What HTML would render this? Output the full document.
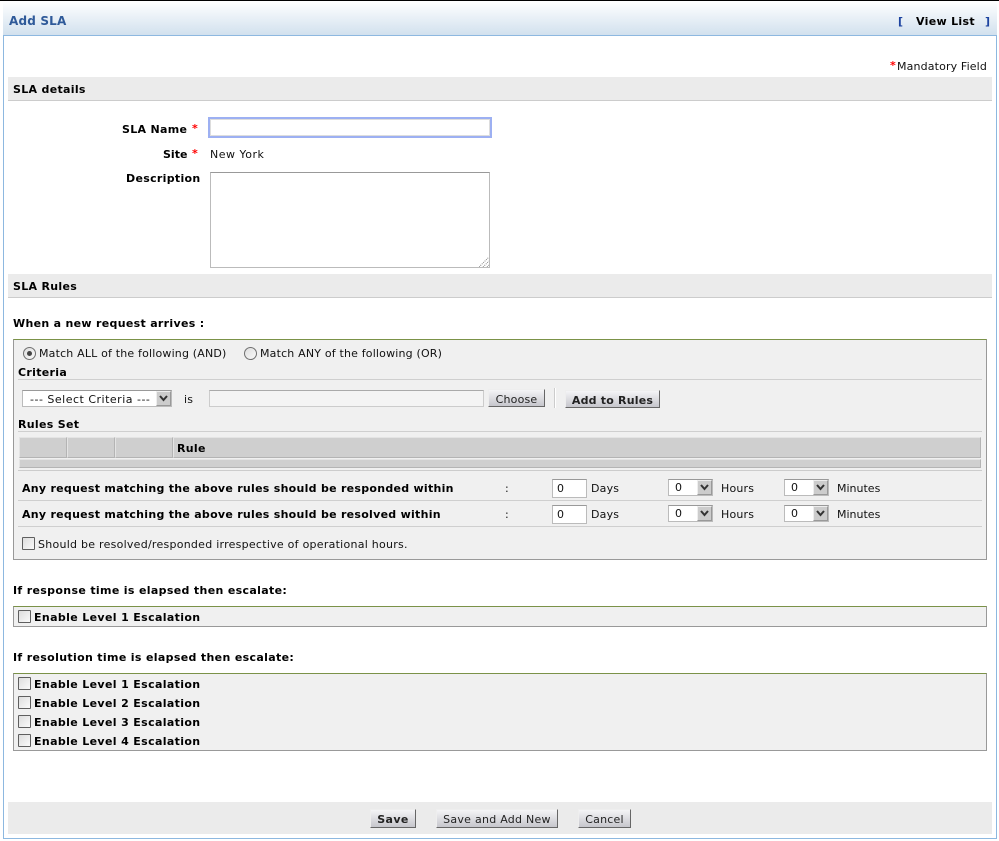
<!DOCTYPE html>
<html><head><meta charset="utf-8"><title>Add SLA</title>
<style>
html,body{margin:0;padding:0;background:#fff}
#p{position:relative;width:999px;height:841px;overflow:hidden;background:#fff;font:11px/14px "DejaVu Sans",Verdana,sans-serif;color:#111}
#p div,#p span.t{position:absolute;white-space:nowrap;box-sizing:border-box}
.t{line-height:14px;margin-top:1px;letter-spacing:.18px}
.b{font-weight:bold;color:#000}
#p span.b{letter-spacing:.31px}
.r{color:#f00;font-weight:bold}
.bar{left:8px;width:984px;background:#ebebeb;border-bottom:1px solid #ccc}
.hr{background:#cfcfcf;height:1px}
.cb{width:13px;height:13px;border:1px solid #5f5f5f;border-radius:1px;background:linear-gradient(135deg,#ddd,#fafafa)}
.rd{width:13px;height:13px;border:1px solid #707070;border-radius:50%;background:linear-gradient(135deg,#ddd,#fafafa)}
.btn{background:linear-gradient(#f4f4f6,#c6c6cc);border:1px solid;border-color:#eee #666 #666 #eee;text-align:center;height:18px;line-height:19px;color:#222;letter-spacing:.2px}
.inp{background:#fff;border:1px solid #bbb;border-top-color:#999;padding-left:4px;line-height:17px;height:19px}
.sel{background:#fff;border:1px solid #bbb;border-top-color:#999;line-height:16px;height:17px;padding-left:6px}
.ar{width:15px;height:15px;top:0;right:0;background:#ccc;border:1px solid #999;border-color:#eee #999 #999 #eee}
.ar svg{position:absolute;left:2px;top:3px}
.th{top:437px;height:21px;background:#cfcfcf;border:1px solid;border-color:#e4e4e4 #b4b4b4 #b4b4b4 #e4e4e4}
</style></head><body>
<div id="p">
<div style="left:0;top:0;width:999px;height:1px;background:#000"></div>
<div style="left:3px;top:35px;width:994px;height:804px;border:1px solid #8db8e0;background:#fff"></div>
<div style="left:3px;top:1px;width:994px;height:35px;background:linear-gradient(#fff,#d2e1ee);border-bottom:1px solid #8db8e0"></div>
<span class="t" style="left:9px;top:13px;font-size:12px;font-weight:bold;color:#2f5a99">Add SLA</span>
<span class="t" style="left:898px;top:14px;font-weight:bold;color:#1d44a0">[</span>
<span class="t b" style="left:916px;top:14px">View List</span>
<span class="t" style="left:985px;top:14px;font-weight:bold;color:#1d44a0">]</span>
<span class="t r" style="left:890px;top:58px">*</span>
<span class="t" style="left:897px;top:59px;letter-spacing:.14px">Mandatory Field</span>

<div class="bar" style="top:77px;height:24px"></div>
<span class="t b" style="left:13px;top:82px">SLA details</span>
<span class="t b" style="left:122px;top:122px">SLA Name</span><span class="t r" style="left:192px;top:121px">*</span>
<div style="left:208px;top:117px;width:284px;height:21px;background:#fff;border:2px solid #9db0f2;box-shadow:inset 0 0 0 1px #ddd"></div>
<span class="t b" style="left:163px;top:147px;letter-spacing:0!important">Site</span><span class="t r" style="left:192px;top:146px">*</span>
<span class="t" style="left:210px;top:147px;letter-spacing:.5px">New York</span>
<span class="t b" style="left:126px;top:171px">Description</span>
<div style="left:210px;top:172px;width:280px;height:96px;background:#fff;border:1px solid #bbb;border-top-color:#999"></div>
<svg style="position:absolute;left:479px;top:257px" width="10" height="10"><path d="M0 10L10 0M4 10L10 4M8 10L10 8" stroke="#888" stroke-width="1" stroke-dasharray="1 1" fill="none"/></svg>

<div class="bar" style="top:274px;height:24px"></div>
<span class="t b" style="left:13px;top:279px">SLA Rules</span>
<span class="t b" style="left:13px;top:316px">When a new request arrives :</span>

<div style="left:13px;top:339px;width:974px;height:221px;background:#f0f0f0;border:1px solid #999;border-top-color:#7b9248"></div>
<div class="rd" style="left:23px;top:347px"></div><div style="left:27px;top:351px;width:5px;height:5px;border-radius:50%;background:#444"></div>
<span class="t" style="left:39px;top:346px">Match ALL of the following (AND)</span>
<div class="rd" style="left:244px;top:347px"></div>
<span class="t" style="left:260px;top:346px">Match ANY of the following (OR)</span>
<span class="t b" style="left:18px;top:365px">Criteria</span>
<div class="hr" style="left:18px;top:379px;width:964px"></div>
<div class="sel" style="left:22px;top:390px;width:150px;padding-left:7px;line-height:18px;letter-spacing:.5px">--- Select Criteria ---<div class="ar"><svg width="9" height="7"><path d="M1 1L4.5 5L8 1" stroke="#333" stroke-width="2" fill="none"/></svg></div></div>
<span class="t" style="left:184px;top:392px">is</span>
<div style="left:209px;top:390px;width:275px;height:17px;background:#f4f4f4;border:1px solid #ccc;border-top-color:#aaa"></div>
<div class="btn" style="left:488px;top:389px;width:57px">Choose</div>
<div style="left:554px;top:388px;width:2px;height:20px;background:#ccc;border-right:1px solid #fff"></div>
<div class="btn b" style="left:565px;top:390px;width:95px;font-weight:bold">Add to Rules</div>
<span class="t b" style="left:18px;top:417px">Rules Set</span>
<div class="hr" style="left:18px;top:431px;width:964px"></div>
<div class="th" style="left:19px;width:48px"></div>
<div class="th" style="left:67px;width:48px"></div>
<div class="th" style="left:115px;width:58px"></div>
<div class="th" style="left:173px;width:808px"></div>
<span class="t b" style="left:177px;top:441px">Rule</span>
<div class="th" style="left:19px;top:459px;width:962px;height:9px"></div>
<div class="hr" style="left:18px;top:470px;width:964px;background:#ccc"></div>

<span class="t b" style="left:22px;top:481px;letter-spacing:.28px">Any request matching the above rules should be responded within</span>
<span class="t" style="left:505px;top:481px">:</span>
<div class="inp" style="left:552px;top:479px;width:35px">0</div>
<span class="t" style="left:591px;top:481px">Days</span>
<div class="sel" style="left:668px;top:479px;width:45px;height:17px">0<div class="ar"><svg width="9" height="7"><path d="M1 1L4.5 5L8 1" stroke="#333" stroke-width="2" fill="none"/></svg></div></div>
<span class="t" style="left:721px;top:481px">Hours</span>
<div class="sel" style="left:784px;top:479px;width:45px;height:17px">0<div class="ar"><svg width="9" height="7"><path d="M1 1L4.5 5L8 1" stroke="#333" stroke-width="2" fill="none"/></svg></div></div>
<span class="t" style="left:837px;top:481px;letter-spacing:0">Minutes</span>
<div class="hr" style="left:18px;top:500px;width:964px"></div>

<span class="t b" style="left:22px;top:507px;letter-spacing:.28px">Any request matching the above rules should be resolved within</span>
<span class="t" style="left:505px;top:507px">:</span>
<div class="inp" style="left:552px;top:505px;width:35px">0</div>
<span class="t" style="left:591px;top:507px">Days</span>
<div class="sel" style="left:668px;top:505px;width:45px;height:17px">0<div class="ar"><svg width="9" height="7"><path d="M1 1L4.5 5L8 1" stroke="#333" stroke-width="2" fill="none"/></svg></div></div>
<span class="t" style="left:721px;top:507px">Hours</span>
<div class="sel" style="left:784px;top:505px;width:45px;height:17px">0<div class="ar"><svg width="9" height="7"><path d="M1 1L4.5 5L8 1" stroke="#333" stroke-width="2" fill="none"/></svg></div></div>
<span class="t" style="left:837px;top:507px;letter-spacing:0">Minutes</span>
<div class="hr" style="left:18px;top:526px;width:964px"></div>

<div class="cb" style="left:22px;top:537px"></div>
<span class="t" style="left:38px;top:537px;letter-spacing:.26px">Should be resolved/responded irrespective of operational hours.</span>

<span class="t b" style="left:13px;top:583px;letter-spacing:.34px">If response time is elapsed then escalate:</span>
<div style="left:13px;top:606px;width:974px;height:21px;background:#f0f0f0;border:1px solid #999;border-top-color:#7b9248"></div>
<div class="cb" style="left:18px;top:610px"></div>
<span class="t b" style="left:34px;top:610px;letter-spacing:.36px">Enable Level 1 Escalation</span>

<span class="t b" style="left:13px;top:650px;letter-spacing:.34px">If resolution time is elapsed then escalate:</span>
<div style="left:13px;top:673px;width:974px;height:78px;background:#f0f0f0;border:1px solid #999;border-top-color:#7b9248"></div>
<div class="cb" style="left:18px;top:677px"></div><span class="t b" style="left:34px;top:677px;letter-spacing:.36px">Enable Level 1 Escalation</span>
<div class="cb" style="left:18px;top:696px"></div><span class="t b" style="left:34px;top:696px;letter-spacing:.36px">Enable Level 2 Escalation</span>
<div class="cb" style="left:18px;top:715px"></div><span class="t b" style="left:34px;top:715px;letter-spacing:.36px">Enable Level 3 Escalation</span>
<div class="cb" style="left:18px;top:734px"></div><span class="t b" style="left:34px;top:734px;letter-spacing:.36px">Enable Level 4 Escalation</span>

<div style="left:8px;top:802px;width:984px;height:32px;background:#ebebeb"></div>
<div class="btn b" style="left:370px;top:809px;width:46px;height:19px;line-height:19px;font-weight:bold;letter-spacing:.4px">Save</div>
<div class="btn" style="left:436px;top:809px;width:122px;height:19px;letter-spacing:.26px">Save and Add New</div>
<div class="btn" style="left:578px;top:809px;width:53px;height:19px">Cancel</div>
</div>
</body></html>
